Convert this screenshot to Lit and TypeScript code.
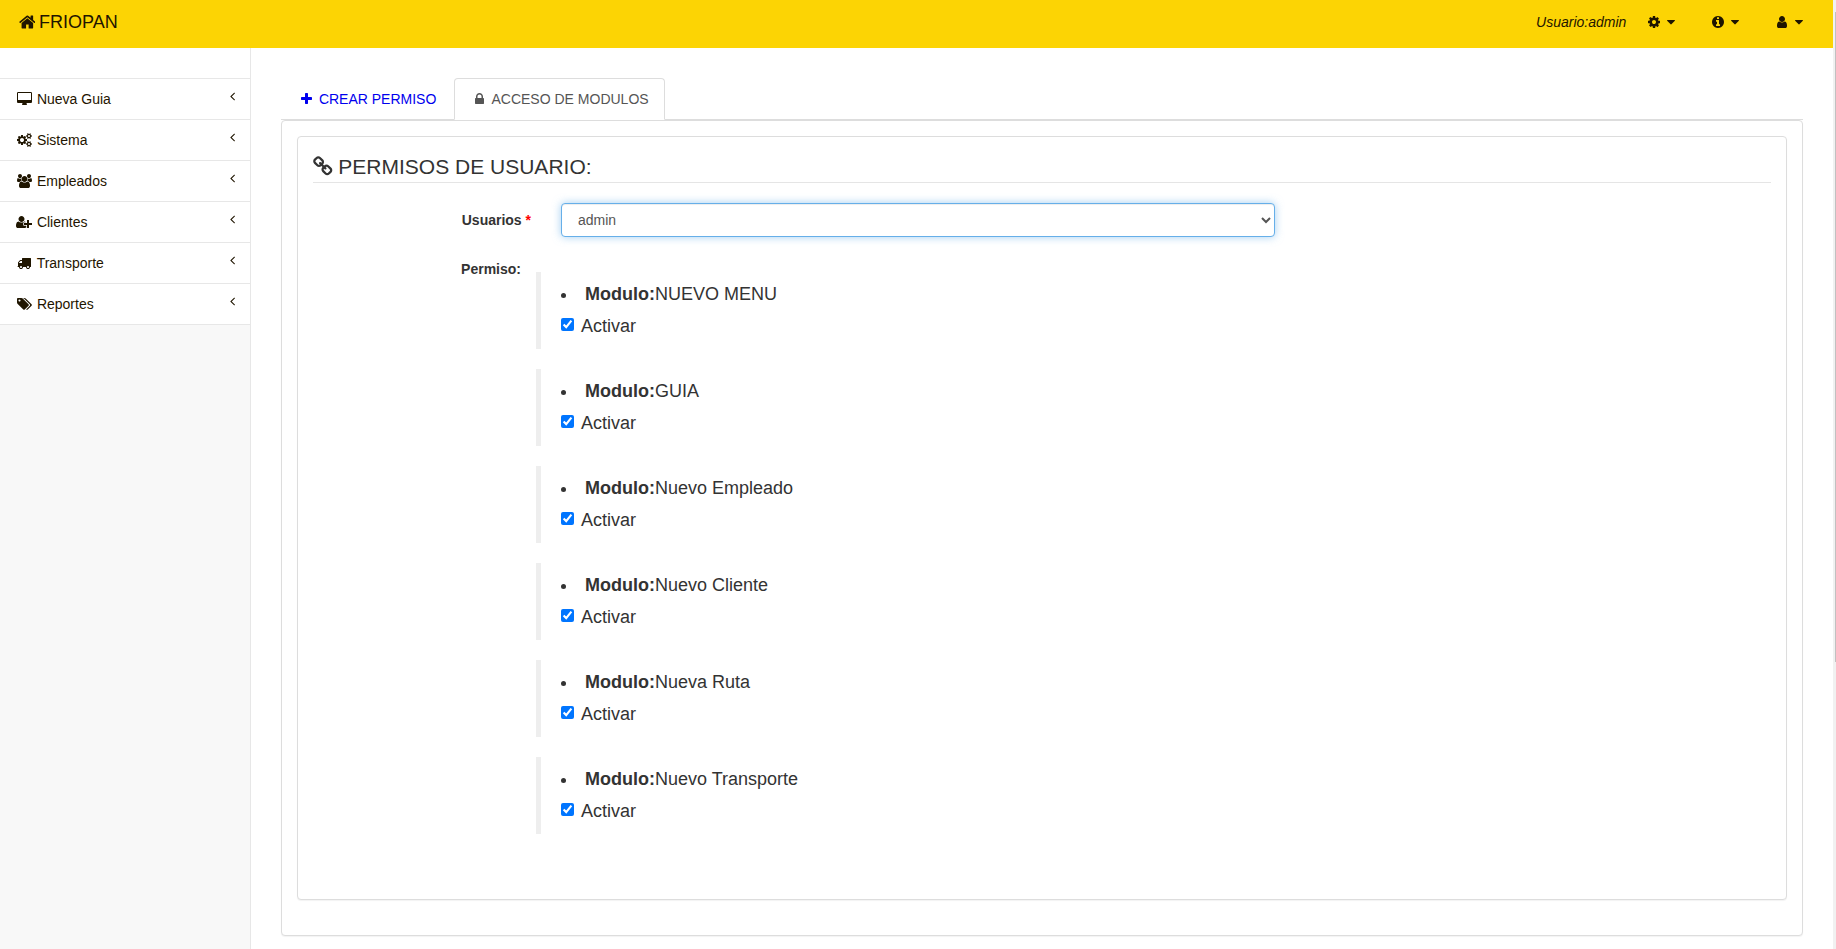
import { LitElement, html, svg, css } from "lit";
import { customElement, property, state } from "lit/decorators.js";

interface Glyph {
  box: string;
  d: string;
  /** Glyph outlines drawn on a y-up grid have to be mirrored. */
  up?: boolean;
}

const GLYPHS: Record<string, Glyph> = {
  home: {
    box: "64 0 1664 1792",
    d: "M1472 992v480q0 26-19 45t-45 19h-384v-384h-256v384h-384q-26 0-45-19t-19-45v-480q0-1 .5-3t.5-3l575-474 575 474q1 2 1 6zm223-69l-62 74q-8 9-21 11h-3q-13 0-21-7l-692-577-692 577q-12 8-24 7-13-2-21-11l-62-74q-8-10-7-23.5t11-21.5l719-599q32-26 76-26t76 26l244 204v-195q0-14 9-23t23-9h192q14 0 23 9t9 23v408l219 182q10 8 11 21.5t-7 23.5z",
  },
  cog: {
    box: "128 0 1536 1792",
    d: "M1152 896q0-106-75-181t-181-75-181 75-75 181 75 181 181 75 181-75 75-181zm512-109v222q0 12-8 23t-20 13l-185 28q-19 54-39 91 35 50 107 138 10 12 10 25t-9 23q-27 37-99 108t-94 71q-12 0-26-9l-138-108q-44 23-91 38-16 136-29 186-7 28-36 28h-222q-14 0-24.5-8.5t-11.5-21.5l-28-184q-49-16-90-37l-141 107q-10 9-25 9-14 0-25-11-126-114-165-168-7-10-7-23 0-12 8-23 15-21 51-66.5t54-70.5q-27-50-41-99l-183-27q-13-2-21-12.5t-8-23.5v-222q0-12 8-23t19-13l186-28q14-46 39-92-40-57-107-138-10-12-10-24 0-10 9-23 26-36 98.5-107.5t94.5-71.5q13 0 26 10l138 107q44-23 91-38 16-136 29-186 7-28 36-28h222q14 0 24.5 8.5t11.5 21.5l28 184q49 16 90 37l142-107q9-9 24-9 13 0 25 10 129 119 165 170 7 8 7 22 0 12-8 23-15 21-51 66.5t-54 70.5q26 50 41 98l183 28q13 2 21 12.5t8 23.5z",
  },
  info: {
    box: "128 0 1536 1792",
    d: "M1152 1376v-160q0-14-9-23t-23-9h-96v-512q0-14-9-23t-23-9h-320q-14 0-23 9t-9 23v160q0 14 9 23t23 9h96v320h-96q-14 0-23 9t-9 23v160q0 14 9 23t23 9h448q14 0 23-9t9-23zm-128-896v-160q0-14-9-23t-23-9h-192q-14 0-23 9t-9 23v160q0 14 9 23t23 9h192q14 0 23-9t9-23zm640 416q0 209-103 385.5t-279.5 279.5-385.5 103-385.5-103-279.5-279.5-103-385.5 103-385.5 279.5-279.5 385.5-103 385.5 103 279.5 279.5 103 385.5z",
  },
  user: {
    box: "256 0 1280 1792",
    d: "M1536 1399q0 109-62.5 187t-150.5 78h-854q-88 0-150.5-78t-62.5-187q0-85 8.5-160.5t31.5-152 58.5-131 94-89 134.5-34.5q131 128 313 128t313-128q76 0 134.5 34.5t94 89 58.5 131 31.5 152 8.5 160.5zm-256-887q0 159-112.5 271.5t-271.5 112.5-271.5-112.5-112.5-271.5 112.5-271.5 271.5-112.5 271.5 112.5 112.5 271.5z",
  },
  caret: {
    box: "384 0 1024 1792",
    d: "M1408 704q0 26-19 45l-448 448q-19 19-45 19t-45-19l-448-448q-19-19-19-45t19-45 45-19h896q26 0 45 19t19 45z",
  },
  desktop: {
    box: "0 0 1920 1792",
    d: "M1792 992v-832q0-13-9.5-22.5t-22.5-9.5h-1600q-13 0-22.5 9.5t-9.5 22.5v832q0 13 9.5 22.5t22.5 9.5h1600q13 0 22.5-9.5t9.5-22.5zm128-832v1088q0 66-47 113t-113 47h-544q0 37 16 77.5t32 71 16 43.5q0 26-19 45t-45 19h-512q-26 0-45-19t-19-45q0-14 16-44t32-70 16-78h-544q-66 0-113-47t-47-113v-1088q0-66 47-113t113-47h1600q66 0 113 47t47 113z",
  },
  cogs: {
    box: "0 0 1920 1792",
    up: true,
    d: "M896 640q0 106 -75 181t-181 75t-181 -75t-75 -181t75 -181t181 -75t181 75t75 181zM1664 128q0 52 -38 90t-90 38t-90 -38t-38 -90q0 -53 37.5 -90.5t90.5 -37.5t90.5 37.5t37.5 90.5zM1664 1152q0 52 -38 90t-90 38t-90 -38t-38 -90q0 -53 37.5 -90.5t90.5 -37.5t90.5 37.5t37.5 90.5zM1280 731v-185q0 -10 -7 -19.5t-16 -10.5l-155 -24q-11 -35 -32 -76q34 -48 90 -115q7 -11 7 -20q0 -12 -7 -19q-23 -30 -82.5 -89.5t-78.5 -59.5q-11 0 -21 7l-115 90q-37 -19 -77 -31q-11 -108 -23 -155q-7 -24 -30 -24h-186q-11 0 -20 7.5t-10 17.5l-23 153q-34 10 -75 31l-118 -89q-7 -7 -20 -7q-11 0 -21 8q-144 133 -144 160q0 9 7 19q10 14 41 53t47 61q-23 44 -35 82l-152 24q-10 1 -17 9.5t-7 19.5v185q0 10 7 19.5t16 10.5l155 24q11 35 32 76q-34 48 -90 115q-7 11 -7 20q0 12 7 20q22 30 82 89t79 59q11 0 21 -7l115 -90q34 18 77 32q11 108 23 154q7 24 30 24h186q11 0 20 -7.5t10 -17.5l23 -153q34 -10 75 -31l118 89q8 7 20 7q11 0 21 -8q144 -133 144 -160q0 -8 -7 -19q-12 -16 -42 -54t-45 -60q23 -48 34 -82l152 -23q10 -2 17 -10.5t7 -19.5zM1920 198v-140q0 -16 -149 -31q-12 -27 -30 -52q51 -113 51 -138q0 -4 -4 -7q-122 -71 -124 -71q-8 0 -46 47t-52 68q-20 -2 -30 -2t-30 2q-14 -21 -52 -68t-46 -47q-2 0 -124 71q-4 3 -4 7q0 25 51 138q-18 25 -30 52q-149 15 -149 31v140q0 16 149 31q13 29 30 52q-51 113 -51 138q0 4 4 7q4 2 35 20t59 34t30 16q8 0 46 -46.5t52 -67.5q20 2 30 2t30 -2q51 71 92 112l6 2q4 0 124 -70q4 -3 4 -7q0 -25 -51 -138q17 -23 30 -52q149 -15 149 -31zM1920 1222v-140q0 -16 -149 -31q-12 -27 -30 -52q51 -113 51 -138q0 -4 -4 -7q-122 -71 -124 -71q-8 0 -46 47t-52 68q-20 -2 -30 -2t-30 2q-14 -21 -52 -68t-46 -47q-2 0 -124 71q-4 3 -4 7q0 25 51 138q-18 25 -30 52q-149 15 -149 31v140q0 16 149 31q13 29 30 52q-51 113 -51 138q0 4 4 7q4 2 35 20t59 34t30 16q8 0 46 -46.5t52 -67.5q20 2 30 2t30 -2q51 71 92 112l6 2q4 0 124 -70q4 -3 4 -7q0 -25 -51 -138q17 -23 30 -52q149 -15 149 -31z",
  },
  users: {
    box: "0 0 1920 1792",
    up: true,
    d: "M593 640q-162 -5 -265 -128h-134q-82 0 -138 40.5t-56 118.5q0 353 124 353q6 0 43.5 -21t97.5 -42.5t119 -21.5q67 0 133 23q-5 -37 -5 -66q0 -139 81 -256zM1664 3q0 -120 -73 -189.5t-194 -69.5h-874q-121 0 -194 69.5t-73 189.5q0 53 3.5 103.5t14 109t26.5 108.5t43 97.5t62 81t85.5 53.5t111.5 20q10 0 43 -21.5t73 -48t107 -48t135 -21.5t135 21.5t107 48t73 48t43 21.5q61 0 111.5 -20t85.5 -53.5t62 -81t43 -97.5t26.5 -108.5t14 -109t3.5 -103.5zM640 1280q0 -106 -75 -181t-181 -75t-181 75t-75 181t75 181t181 75t181 -75t75 -181zM1344 896q0 -159 -112.5 -271.5t-271.5 -112.5t-271.5 112.5t-112.5 271.5t112.5 271.5t271.5 112.5t271.5 -112.5t112.5 -271.5zM1920 671q0 -78 -56 -118.5t-138 -40.5h-134q-103 123 -265 128q81 117 81 256q0 29 -5 66q66 -23 133 -23q59 0 119 21.5t97.5 42.5t43.5 21q124 0 124 -353zM1792 1280q0 -106 -75 -181t-181 -75t-181 75t-75 181t75 181t181 75t181 -75t75 -181z",
  },
  userPlus: {
    box: "0 0 2048 1792",
    up: true,
    d: "M704 640q-159 0 -271.5 112.5t-112.5 271.5t112.5 271.5t271.5 112.5t271.5 -112.5t112.5 -271.5t-112.5 -271.5t-271.5 -112.5zM1664 512h352q13 0 22.5 -9.5t9.5 -22.5v-192q0 -13 -9.5 -22.5t-22.5 -9.5h-352v-352q0 -13 -9.5 -22.5t-22.5 -9.5h-192q-13 0 -22.5 9.5t-9.5 22.5v352h-352q-13 0 -22.5 9.5t-9.5 22.5v192q0 13 9.5 22.5t22.5 9.5h352v352q0 13 9.5 22.5t22.5 9.5h192q13 0 22.5 -9.5t9.5 -22.5v-352zM928 288q0 -52 38 -90t90 -38h256v-238q-68 -50 -171 -50h-874q-121 0 -194 69t-73 190q0 53 3.5 103.5t14 109t26.5 108.5t43 97.5t62 81t85.5 53.5t111.5 20q19 0 39 -17q79 -61 154.5 -91.5t164.5 -30.5t164.5 30.5t154.5 91.5q20 17 39 17q132 0 217 -96h-223q-52 0 -90 -38t-38 -90v-192z",
  },
  truck: {
    box: "0 0 1792 1792",
    up: true,
    d: "M640 128q0 52 -38 90t-90 38t-90 -38t-38 -90t38 -90t90 -38t90 38t38 90zM256 640h384v256h-158q-13 0 -22 -9l-195 -195q-9 -9 -9 -22v-30zM1536 128q0 52 -38 90t-90 38t-90 -38t-38 -90t38 -90t90 -38t90 38t38 90zM1792 1216v-1024q0 -15 -4 -26.5t-13.5 -18.5t-16.5 -11.5t-23.5 -6t-22.5 -2t-25.5 0t-22.5 0.5q0 -106 -75 -181t-181 -75t-181 75t-75 181h-384q0 -106 -75 -181t-181 -75t-181 75t-75 181h-64q-3 0 -22.5 -0.5t-25.5 0t-22.5 2t-23.5 6t-16.5 11.5t-13.5 18.5t-4 26.5q0 26 19 45t45 19v320q0 8 -0.5 35t0 38t2.5 34.5t6.5 37t14 30.5t22.5 30l198 198q19 19 50.5 32t58.5 13h160v192q0 26 19 45t45 19h1024q26 0 45 -19t19 -45z",
  },
  tags: {
    box: "0 0 1920 1792",
    up: true,
    d: "M448 1088q0 53 -37.5 90.5t-90.5 37.5t-90.5 -37.5t-37.5 -90.5t37.5 -90.5t90.5 -37.5t90.5 37.5t37.5 90.5zM1515 512q0 -53 -37 -90l-491 -492q-39 -37 -91 -37q-53 0 -90 37l-715 716q-38 37 -64.5 101t-26.5 117v416q0 52 38 90t90 38h416q53 0 117 -26.5t102 -64.5l715 -714q37 -39 37 -91zM1899 512q0 -53 -37 -90l-491 -492q-39 -37 -91 -37q-36 0 -59 14t-53 45l470 470q37 37 37 90q0 52 -37 91l-715 714q-38 38 -102 64.5t-117 26.5h224q53 0 117 -26.5t102 -64.5l715 -714q37 -39 37 -91z",
  },
  angle: {
    box: "0 0 640 1792",
    up: true,
    d: "M627 992q0 -13 -10 -23l-393 -393l393 -393q10 -10 10 -23t-10 -23l-50 -50q-10 -10 -23 -10t-23 10l-466 466q-10 10 -10 23t10 23l466 466q10 10 23 10t23 -10l50 -50q10 -10 10 -23z",
  },
  plus: {
    box: "0 0 1408 1792",
    up: true,
    d: "M1408 800v-192q0 -40 -28 -68t-68 -28h-416v-416q0 -40 -28 -68t-68 -28h-192q-40 0 -68 28t-28 68v416h-416q-40 0 -68 28t-28 68v192q0 40 28 68t68 28h416v416q0 40 28 68t68 28h192q40 0 68 -28t28 -68v-416h416q40 0 68 -28t28 -68z",
  },
  lock: {
    box: "0 0 1152 1792",
    up: true,
    d: "M320 768h512v192q0 106 -75 181t-181 75t-181 -75t-75 -181v-192zM1152 672v-576q0 -40 -28 -68t-68 -28h-960q-40 0 -68 28t-28 68v576q0 40 28 68t68 28h32v192q0 184 132 316t316 132t316 -132t132 -316v-192h32q40 0 68 -28t28 -68z",
  },
  link: {
    box: "0 0 1664 1792",
    up: true,
    d: "M1456 320q0 40 -28 68l-208 208q-28 28 -68 28q-42 0 -72 -32q3 -3 19 -18.5t21.5 -21.5t15 -19t13 -25.5t3.5 -27.5q0 -40 -28 -68t-68 -28q-15 0 -27.5 3.5t-25.5 13t-19 15t-21.5 21.5t-18.5 19q-33 -31 -33 -73q0 -40 28 -68l206 -207q27 -27 68 -27q40 0 68 26l147 146q28 28 28 67zM753 1025q0 40 -28 68l-206 207q-28 28 -68 28q-39 0 -68 -27l-147 -146q-28 -28 -28 -67q0 -40 28 -68l208 -208q27 -27 68 -27q42 0 72 31q-3 3 -19 18.5t-21.5 21.5t-15 19t-13 25.5t-3.5 27.5q0 40 28 68t68 28q15 0 27.5 -3.5t25.5 -13t19 -15t21.5 -21.5t18.5 -19q33 31 33 73zM1648 320q0 -120 -85 -203l-147 -146q-83 -83 -203 -83q-121 0 -204 85l-206 207q-83 83 -83 203q0 123 88 209l-88 88q-86 -88 -208 -88q-120 0 -204 84l-208 208q-84 84 -84 204t85 203l147 146q83 83 203 83q121 0 204 -85l206 -207q83 -83 83 -203q0 -123 -88 -209l88 -88q86 88 208 88q120 0 204 -84l208 -208q84 -84 84 -204z",
  },
};

@customElement("fa-icon")
class FaIcon extends LitElement {
  @property() name = "home";

  static styles = css`
    :host {
      display: inline-block;
      line-height: 1;
    }
    .glyph {
      display: inline-block;
      height: 1em;
      width: auto;
      fill: currentColor;
      vertical-align: var(--icon-drop, -2px);
    }
  `;

  render() {
    const g = GLYPHS[this.name];
    return html`<svg class="glyph" viewBox=${g.box} aria-hidden="true">
      ${svg`<path d=${g.d} transform=${g.up ? "translate(0 1536) scale(1 -1)" : "scale(1)"}></path>`}
    </svg>`;
  }
}

const MENU = [
  { icon: "desktop", label: "Nueva Guia" },
  { icon: "cogs", label: "Sistema" },
  { icon: "users", label: "Empleados" },
  { icon: "userPlus", label: "Clientes" },
  { icon: "truck", label: "Transporte" },
  { icon: "tags", label: "Reportes" },
];

const ACTIONS = [
  { icon: "cog", label: "Configuracion" },
  { icon: "info", label: "Informacion" },
  { icon: "user", label: "Cuenta" },
];

@customElement("app-root")
class AppRoot extends LitElement {
  @state() private modules = [
    { name: "NUEVO MENU", active: true },
    { name: "GUIA", active: true },
    { name: "Nuevo Empleado", active: true },
    { name: "Nuevo Cliente", active: true },
    { name: "Nueva Ruta", active: true },
    { name: "Nuevo Transporte", active: true },
  ];

  static styles = css`
    :host {
      display: flex;
      min-height: 100vh;
      font: 14px/20px "Liberation Sans", Arial, sans-serif;
      color: #333;
      background: #fff;
    }
    *,
    *::before,
    *::after {
      box-sizing: border-box;
    }
    a {
      text-decoration: none;
    }
    .fw {
      width: 18px;
      text-align: center;
    }

    .page {
      flex: 1;
      min-width: 0;
      display: flex;
      flex-direction: column;
    }
    .scroll {
      width: 3px;
      padding: 12px 0 0 2px;
      background: #f1f1f1;
    }
    .thumb {
      height: 650px;
      background: #c1c1c1;
    }

    .bar {
      display: flex;
      align-items: center;
      justify-content: space-between;
      height: 48px;
      padding: 0 15px 4px;
      background: #fcd404;
      color: #1f1500;
    }
    .brand {
      --icon-drop: -3px;
      font-size: 18px;
      color: inherit;
    }
    .brand .fw {
      width: 24px;
    }
    .actions {
      display: flex;
      align-items: center;
      gap: 4px;
    }
    .who {
      font-style: italic;
    }
    .drop {
      padding: 0 15px;
      border: 0;
      background: none;
      font: inherit;
      color: inherit;
    }

    .body {
      flex: 1;
      display: flex;
    }
    .side {
      width: 251px;
      border-right: 1px solid #e7e7e7;
      background: #f8f8f8;
    }
    .menu {
      margin: 0;
      padding: 30px 0 0;
      list-style: none;
      background: #fff;
    }
    .entry {
      border-bottom: 1px solid #e7e7e7;
    }
    .entry:first-child {
      border-top: 1px solid #e7e7e7;
    }
    .go {
      display: flex;
      justify-content: space-between;
      padding: 10px 15px;
      color: #1f1500;
    }

    .main {
      flex: 1;
      min-width: 0;
      padding: 30px 30px 0;
    }
    .tabs {
      display: flex;
      gap: 2px;
      border-bottom: 1px solid #ddd;
    }
    .tab {
      margin-bottom: -1px;
      padding: 10px 15px;
      border: 1px solid transparent;
      border-radius: 4px 4px 0 0;
      color: #00e;
    }
    .tab.on {
      border-color: #ddd;
      border-bottom-color: #fff;
      background: #fff;
      color: #555;
    }
    .panel {
      padding: 15px;
      border: 1px solid #ddd;
      border-radius: 4px;
      background: #fff;
      box-shadow: 0 1px 1px rgba(0, 0, 0, 0.05);
    }
    .panel .panel {
      margin-bottom: 20px;
    }
    .title {
      --icon-drop: -3px;
      margin: 0 0 20px;
      border-bottom: 1px solid #e5e5e5;
      font-size: 21px;
      font-weight: 400;
      line-height: 30px;
    }
    .row {
      display: grid;
      grid-template-columns: 2fr 6fr 4fr;
      margin: 0 -15px 15px;
    }
    .key {
      padding: 7px 15px 0;
      font-weight: 700;
      text-align: right;
    }
    .key.short {
      padding-right: 25px;
    }
    .req {
      color: #f00;
    }
    .cell {
      padding: 0 15px;
    }
    .pick {
      display: block;
      width: 100%;
      height: 34px;
      padding: 6px 12px;
      border: 1px solid #66afe9;
      border-radius: 4px;
      outline: 0;
      background-color: #fff;
      box-shadow: inset 0 1px 1px rgba(0, 0, 0, 0.075), 0 0 8px rgba(102, 175, 233, 0.6);
      font: inherit;
      color: #555;
    }
    .modules {
      display: grid;
      gap: 20px;
      margin: 0 0 0 -25px;
      padding: 20px 0 35px;
      font-size: 18px;
      line-height: 25px;
    }
    .module {
      padding: 10px 20px;
      border-left: 5px solid #eee;
    }
    .names {
      margin: 0;
      padding: 0;
      list-style-position: inside;
    }
    .check {
      display: flex;
      align-items: flex-start;
      gap: 7px;
      padding-top: 7px;
    }
    .box {
      width: 13px;
      height: 13px;
      margin: 4px 0 0;
    }
  `;

  private toggle(index: number) {
    this.modules = this.modules.map((m, i) => (i === index ? { ...m, active: !m.active } : m));
  }

  render() {
    return html`
      <div class="page">
        <header class="bar">
          <a class="brand" href="#"><fa-icon class="fw" name="home"></fa-icon>FRIOPAN</a>
          <div class="actions">
            <span class="who">Usuario:admin</span>
            ${ACTIONS.map(
              (a) => html`<button class="drop" type="button" aria-label=${a.label}>
                <fa-icon class="fw" name=${a.icon}></fa-icon> <fa-icon name="caret"></fa-icon>
              </button>`
            )}
          </div>
        </header>
        <div class="body">
          <nav class="side">
            <ul class="menu">
              ${MENU.map(
                (m) => html`<li class="entry">
                  <a class="go" href="#">
                    <span><fa-icon class="fw" name=${m.icon}></fa-icon> ${m.label}</span>
                    <fa-icon name="angle"></fa-icon>
                  </a>
                </li>`
              )}
            </ul>
          </nav>
          <main class="main">
            <nav class="tabs">
              <a class="tab" href="#crear"><fa-icon class="fw" name="plus"></fa-icon> CREAR PERMISO</a>
              <a class="tab on" href="#acceso"><fa-icon class="fw" name="lock"></fa-icon> ACCESO DE MODULOS</a>
            </nav>
            <div class="panel">
              <section class="panel">
                <h1 class="title"><fa-icon name="link"></fa-icon> PERMISOS DE USUARIO:</h1>
                <div class="row">
                  <label class="key" for="usuario">Usuarios <span class="req">*</span></label>
                  <div class="cell">
                    <select class="pick" id="usuario">
                      <option selected>admin</option>
                    </select>
                  </div>
                </div>
                <div class="row" role="group" aria-labelledby="permiso">
                  <span class="key short" id="permiso">Permiso:</span>
                  <div class="cell">
                    <div class="modules">
                      ${this.modules.map(
                        (m, i) => html`<div class="module">
                          <ul class="names"><li><b>Modulo:</b>${m.name}</li></ul>
                          <label class="check"><input class="box" type="checkbox" .checked=${m.active} @change=${() => this.toggle(i)} /><span>Activar</span></label>
                        </div>`
                      )}
                    </div>
                  </div>
                </div>
              </section>
            </div>
          </main>
        </div>
      </div>
      <div class="scroll"><div class="thumb"></div></div>
    `;
  }
}
